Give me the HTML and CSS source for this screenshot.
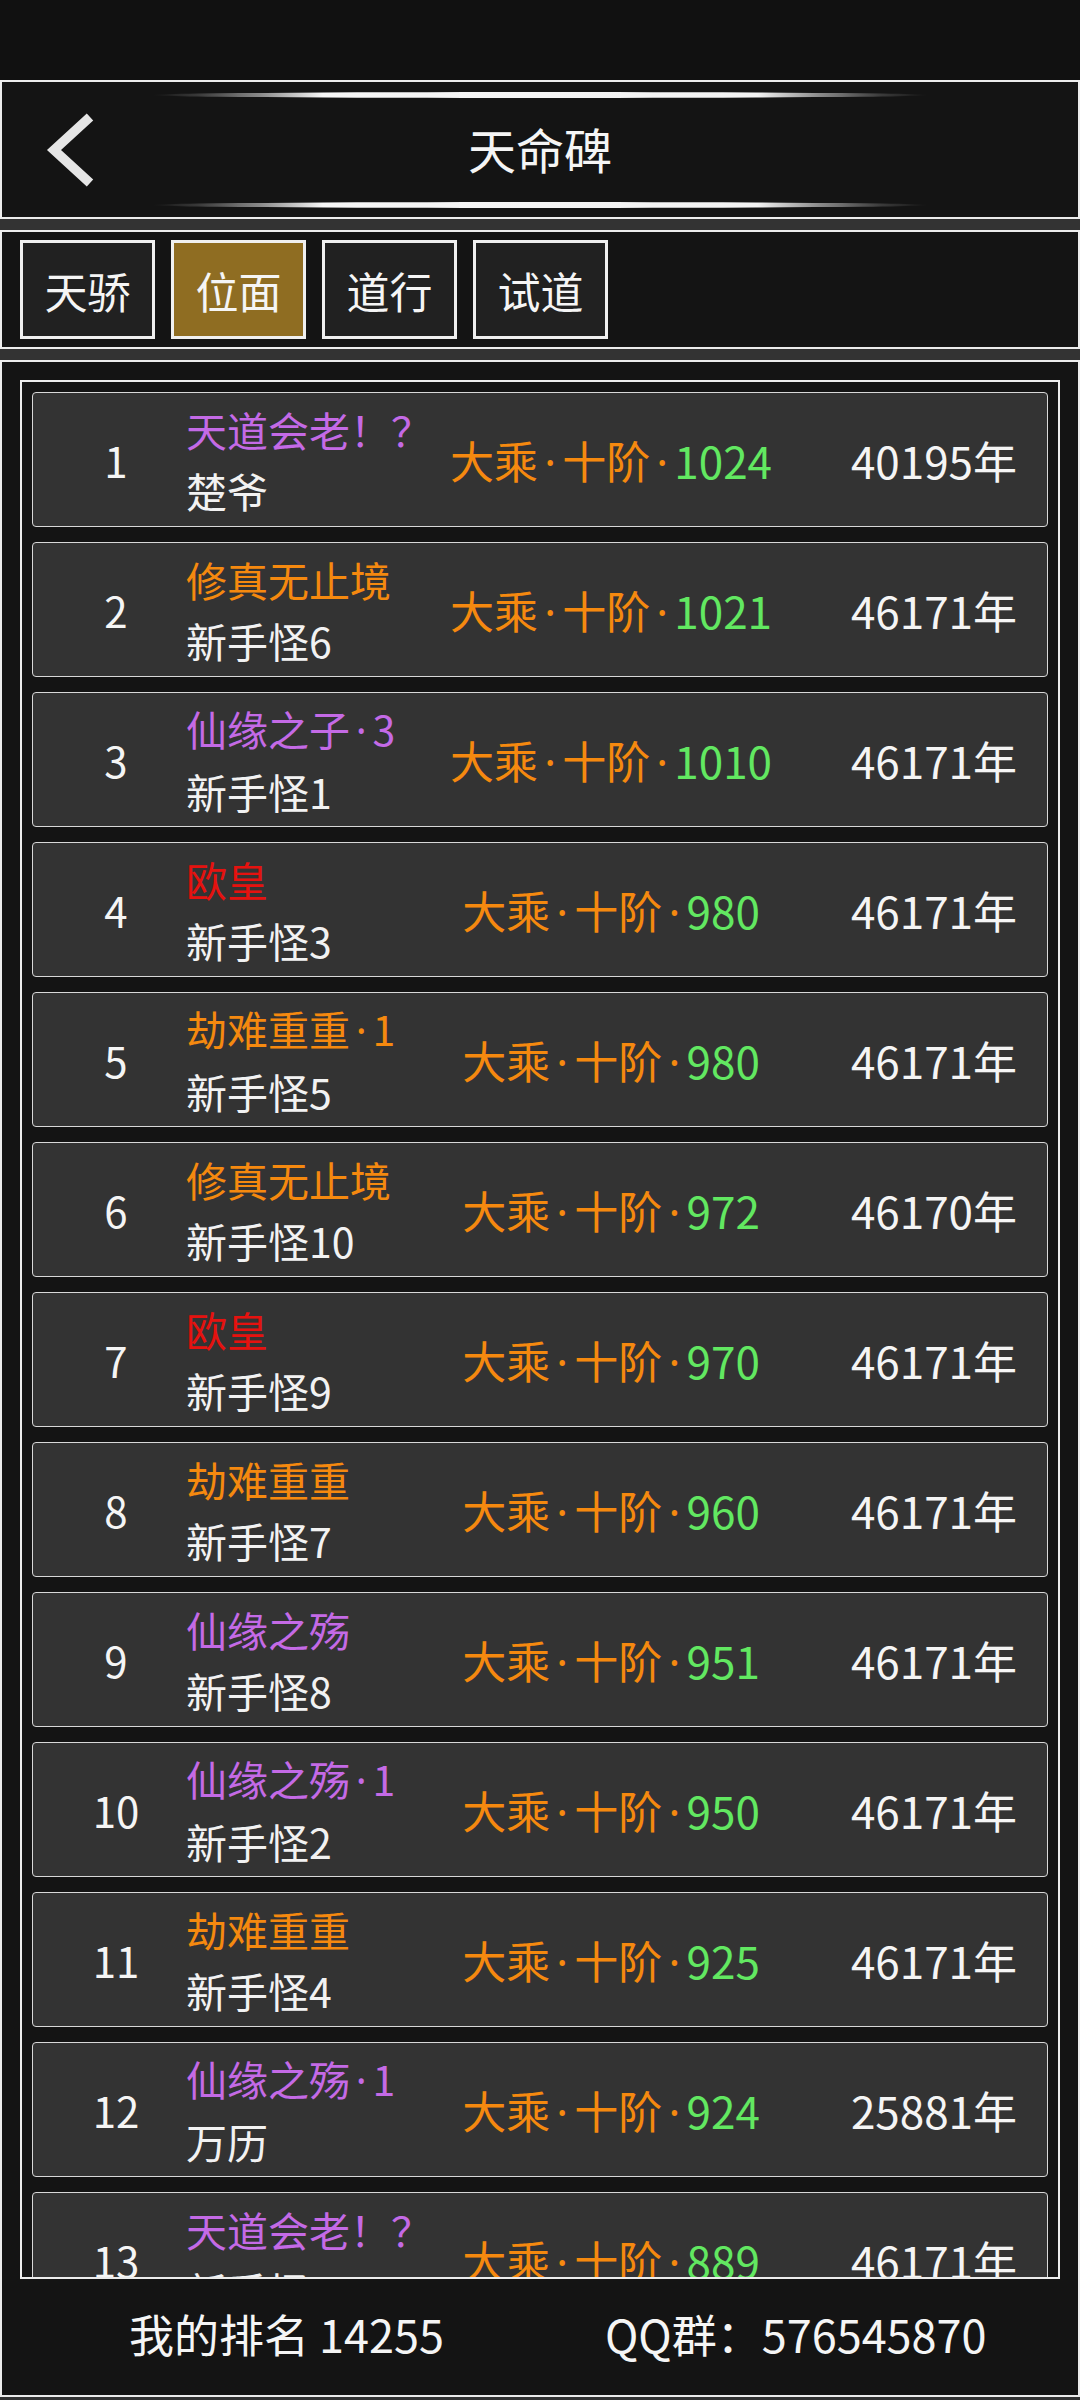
FILE: index.html
```html
<!DOCTYPE html>
<html lang="zh-CN">
<head>
<meta charset="utf-8">
<title>天命碑</title>
<link rel="stylesheet" href="styles.css">
</head>
<body>
<div class="page">
  <div class="statusbar"></div>
  <div class="frame">
    <header class="box header">
      <div class="back">
        <svg width="150" height="135" viewBox="0 0 150 135"><polyline points="88,35 52,68 88,101" fill="none" stroke="#e6e6e6" stroke-width="9.5" stroke-linejoin="miter" stroke-linecap="butt"/></svg>
      </div>
      <div class="title-col">
        <div class="glow"></div>
        <div class="title">天命碑</div>
        <div class="glow"></div>
      </div>
      <div class="spacer"></div>
    </header>
    <nav class="box tabs">
      <div class="tab">天骄</div>
      <div class="tab active">位面</div>
      <div class="tab">道行</div>
      <div class="tab">试道</div>
    </nav>
    <section class="box list-box">
      <div class="list">
        <div class="row"><div class="rank">1</div><div class="name"><div class="purple">天道会老<span class="fw">！</span><span class="fw">？</span></div><div>楚爷</div></div><div class="realm"><span class="orange">大乘<span class="dot">·</span>十阶<span class="dot">·</span></span><span class="green">1024</span></div><div class="years">40195年</div></div>
        <div class="row"><div class="rank">2</div><div class="name"><div class="orange">修真无止境</div><div>新手怪6</div></div><div class="realm"><span class="orange">大乘<span class="dot">·</span>十阶<span class="dot">·</span></span><span class="green">1021</span></div><div class="years">46171年</div></div>
        <div class="row"><div class="rank">3</div><div class="name"><div class="purple">仙缘之子<span class="dot">·</span>3</div><div>新手怪1</div></div><div class="realm"><span class="orange">大乘<span class="dot">·</span>十阶<span class="dot">·</span></span><span class="green">1010</span></div><div class="years">46171年</div></div>
        <div class="row"><div class="rank">4</div><div class="name"><div class="red">欧皇</div><div>新手怪3</div></div><div class="realm"><span class="orange">大乘<span class="dot">·</span>十阶<span class="dot">·</span></span><span class="green">980</span></div><div class="years">46171年</div></div>
        <div class="row"><div class="rank">5</div><div class="name"><div class="orange">劫难重重<span class="dot">·</span>1</div><div>新手怪5</div></div><div class="realm"><span class="orange">大乘<span class="dot">·</span>十阶<span class="dot">·</span></span><span class="green">980</span></div><div class="years">46171年</div></div>
        <div class="row"><div class="rank">6</div><div class="name"><div class="orange">修真无止境</div><div>新手怪10</div></div><div class="realm"><span class="orange">大乘<span class="dot">·</span>十阶<span class="dot">·</span></span><span class="green">972</span></div><div class="years">46170年</div></div>
        <div class="row"><div class="rank">7</div><div class="name"><div class="red">欧皇</div><div>新手怪9</div></div><div class="realm"><span class="orange">大乘<span class="dot">·</span>十阶<span class="dot">·</span></span><span class="green">970</span></div><div class="years">46171年</div></div>
        <div class="row"><div class="rank">8</div><div class="name"><div class="orange">劫难重重</div><div>新手怪7</div></div><div class="realm"><span class="orange">大乘<span class="dot">·</span>十阶<span class="dot">·</span></span><span class="green">960</span></div><div class="years">46171年</div></div>
        <div class="row"><div class="rank">9</div><div class="name"><div class="purple">仙缘之殇</div><div>新手怪8</div></div><div class="realm"><span class="orange">大乘<span class="dot">·</span>十阶<span class="dot">·</span></span><span class="green">951</span></div><div class="years">46171年</div></div>
        <div class="row"><div class="rank">10</div><div class="name"><div class="purple">仙缘之殇<span class="dot">·</span>1</div><div>新手怪2</div></div><div class="realm"><span class="orange">大乘<span class="dot">·</span>十阶<span class="dot">·</span></span><span class="green">950</span></div><div class="years">46171年</div></div>
        <div class="row"><div class="rank">11</div><div class="name"><div class="orange">劫难重重</div><div>新手怪4</div></div><div class="realm"><span class="orange">大乘<span class="dot">·</span>十阶<span class="dot">·</span></span><span class="green">925</span></div><div class="years">46171年</div></div>
        <div class="row"><div class="rank">12</div><div class="name"><div class="purple">仙缘之殇<span class="dot">·</span>1</div><div>万历</div></div><div class="realm"><span class="orange">大乘<span class="dot">·</span>十阶<span class="dot">·</span></span><span class="green">924</span></div><div class="years">25881年</div></div>
        <div class="row"><div class="rank">13</div><div class="name"><div class="purple">天道会老<span class="fw">！</span><span class="fw">？</span></div><div>新手怪0</div></div><div class="realm"><span class="orange">大乘<span class="dot">·</span>十阶<span class="dot">·</span></span><span class="green">889</span></div><div class="years">46171年</div></div>
      </div>
      <footer class="footer">
        <div class="my-rank">我的排名 14255</div>
        <div class="qq">QQ群：576545870</div>
      </footer>
    </section>
  </div>
</div>
</body>
</html>
```
FILE: styles.css
```css
* { box-sizing: border-box; }
html, body {
  margin: 0;
  padding: 0;
  background: #111111;
}
body {
  width: 1080px;
  height: 2400px;
  overflow: hidden;
  font-family: "Noto Sans CJK SC", "Noto Sans", sans-serif;
  color: #f2f2f2;
}
.page {
  width: 1080px;
  height: 2400px;
  display: flex;
  flex-direction: column;
}
.statusbar {
  height: 80px;
  background: #111111;
}
.frame {
  flex: 1;
  background: #333333;
  display: flex;
  flex-direction: column;
  gap: 11px;
}
.box {
  border: 2px solid #ececec;
  background: #141414;
}
.header {
  height: 139px;
  display: grid;
  grid-template-columns: 150px 1fr 150px;
}
.back svg { display: block; }
.title-col {
  display: flex;
  flex-direction: column;
  align-items: stretch;
  padding-top: 10px;
}
.glow {
  height: 6px;
  border-radius: 50%;
  background: linear-gradient(to right, rgba(80,80,80,0) 0%, #3a3a3a 6%, #8a8a8a 14%, #f6f6f6 22%, #f2f2f2 78%, #8a8a8a 86%, #3a3a3a 94%, rgba(80,80,80,0) 100%);
}
.title {
  height: 104px;
  display: flex;
  align-items: center;
  justify-content: center;
  font-size: 48px;
  color: #f5f5f5;
  padding-bottom: 4px;
}
.tabs {
  height: 119px;
  display: flex;
  align-items: center;
  gap: 16px;
  padding-left: 18px;
}
.tab {
  width: 135px;
  height: 99px;
  border: 3px solid #f0f0f0;
  background: #212121;
  display: flex;
  align-items: center;
  justify-content: center;
  font-size: 43px;
  color: #f5f5f5;
}
.tab.active {
  background: #8f6d22;
}
.list-box {
  height: 2037px;
  display: flex;
  flex-direction: column;
}
.list {
  margin: 18px 18px 0 18px;
  height: 1899px;
  border: 2px solid #ececec;
  padding: 10px;
  overflow: hidden;
  display: flex;
  flex-direction: column;
  gap: 15px;
}
.row {
  flex: none;
  height: 135px;
  border: 1px solid #d8d8d8;
  border-radius: 4px;
  background: #333333;
  display: grid;
  grid-template-columns: 153px 245px 360px 1fr;
  align-items: center;
}
.rank {
  padding-left: 13px;
  text-align: center;
  font-size: 42px;
  color: #f5f5f5;
}
.name {
  font-size: 41px;
  line-height: 61px;
  white-space: nowrap;
  color: #f2f2f2;
}
.fw {
  display: inline-block;
  width: 1em;
  text-align: center;
}
.dot {
  display: inline-block;
  width: 0.55em;
  text-align: center;
  font-family: "Noto Sans", "DejaVu Sans", sans-serif;
}
.realm {
  text-align: center;
  font-size: 44px;
  white-space: nowrap;
}
.years {
  text-align: right;
  padding-right: 30px;
  font-size: 44px;
  color: #f5f5f5;
  white-space: nowrap;
}
.purple { color: #c46ae6; }
.orange { color: #f5890f; }
.green { color: #62e861; }
.red { color: #e5120f; }
.footer {
  flex: 1;
  display: flex;
  align-items: center;
  padding-left: 127px;
  gap: 161px;
  font-size: 45px;
  color: #f5f5f5;
  padding-bottom: 8px;
}
```
